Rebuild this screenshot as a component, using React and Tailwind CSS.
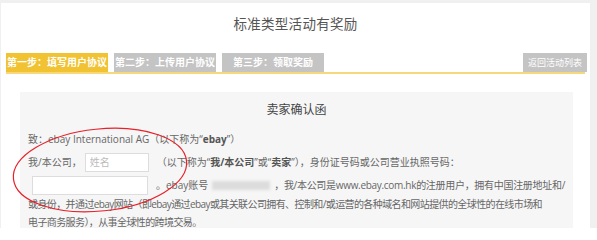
const FONT = { fontFamily: '"Open Sans", "Noto Sans CJK SC", sans-serif' }

function Tab({ label, active }) {
  return (
    <div
      className={`h-[19px] w-[102px] flex items-center justify-center text-[10px] text-white font-bold ${
        active ? 'bg-[#f1c232]' : 'bg-[#c4c4c4]'
      }`}
    >
      {label}
    </div>
  )
}

export default function App() {
  return (
    <div className="w-[597px] h-[228px] bg-[#f0f0f0] overflow-hidden relative" style={FONT}>
      <div className="mt-[3px] ml-[1px] w-[589px] h-[225px] bg-white">
        {/* header */}
        <div className="h-[50px] flex items-center justify-center pb-[7px]">
          <h1 className="text-[13.5px] text-[#555] tracking-[0.3px]">标准类型活动有奖励</h1>
        </div>

        {/* steps */}
        <div className="mx-[5px] flex items-end border-b-2 border-[#f6d77a]">
          <div className="flex gap-[6px]">
            <Tab label="第一步：填写用户协议" active />
            <Tab label="第二步：上传用户协议" />
            <Tab label="第三步：领取奖励" />
          </div>
          <div className="ml-auto mr-[-2px] h-[19px] w-[64px] bg-[#c4c4c4] flex items-center justify-center text-[9px] text-white whitespace-nowrap">
            返回活动列表
          </div>
        </div>

        {/* letter */}
        <div className="ml-[19px] mt-[18px] w-[553px] h-[140px] bg-[#f6f6f6] px-[8px] text-[10px] text-[#666] whitespace-nowrap">
          <div className="pt-[9px] text-center text-[12px] text-[#444]">卖家确认函</div>
          <div className="mt-[12px] leading-[16px]">
            致：ebay International AG（以下称为“<b className="text-[#555]">ebay</b>”）
          </div>
          <div className="mt-[5px] flex items-center h-[20px]">
            <span>我/本公司，</span>
            <input
              className="ml-[3px] w-[64px] h-[19px] bg-white border border-[#ddd] px-[4px] text-[10px] outline-none placeholder:text-[#bbb]"
              placeholder="姓名"
            />
            <span className="ml-[8px]">
              （以下称为“<b className="text-[#555]">我/本公司</b>”或“<b className="text-[#555]">卖家</b>”），身份证号码或公司营业执照号码：
            </span>
          </div>
          <div className="mt-[3px] flex items-center h-[20px]">
            <input className="ml-[4px] w-[116px] h-[19px] bg-white border border-[#ddd] outline-none" />
            <span className="ml-[8px]">。ebay账号</span>
            <span className="inline-block w-[58px] h-[9px] bg-[#dcdcdc] blur-[1.5px] mx-[4px]" />
            <span className="tracking-[-0.3px]">，我/本公司是www.ebay.com.hk的注册用户，拥有中国注册地址和/</span>
          </div>
          <div className="leading-[18px] tracking-[-0.6px]">
            或身份，并通过ebay网站（即ebay通过ebay或其关联公司拥有、控制和/或运营的各种域名和网站提供的全球性的在线市场和
            <br />
            电子商务服务），从事全球性的跨境交易。
          </div>
        </div>
      </div>

      {/* red annotation circle */}
      <svg className="absolute left-0 top-0 pointer-events-none" width="597" height="228">
        <ellipse
          cx="100"
          cy="170"
          rx="87"
          ry="41"
          transform="rotate(-6 100 170)"
          fill="none"
          stroke="#e8202a"
          strokeWidth="1.2"
        />
      </svg>
    </div>
  )
}
